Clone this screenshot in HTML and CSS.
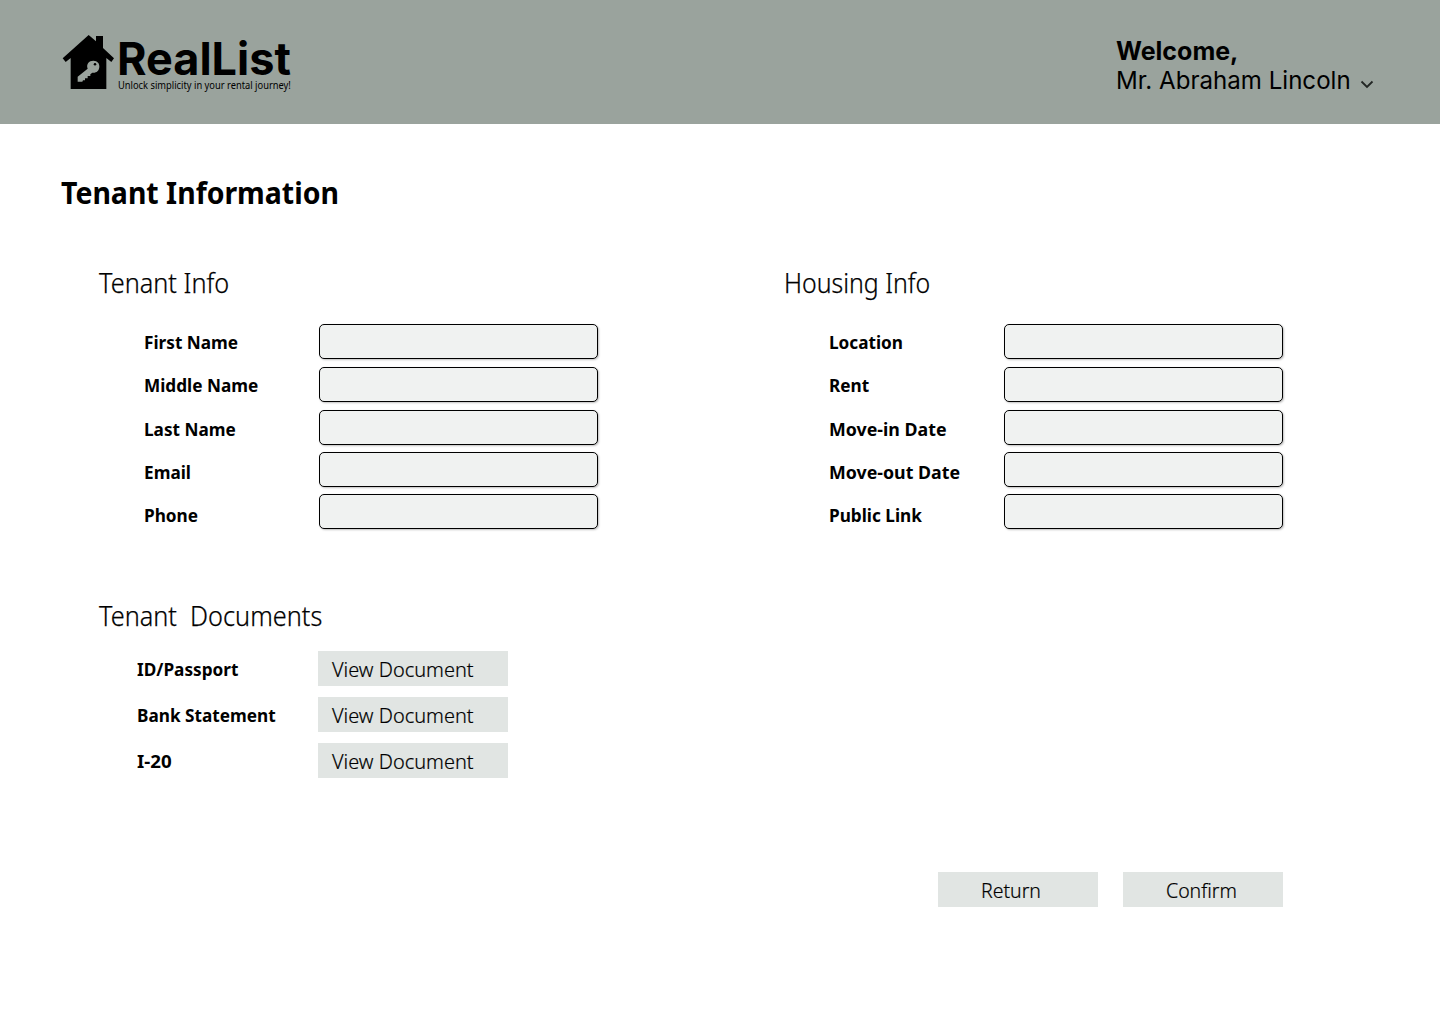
FILE: index.html
```
<!DOCTYPE html>
<html lang="en">
<head>
<meta charset="utf-8">
<title>RealList - Tenant Information</title>
<link rel="stylesheet" href="styles.css">
</head>
<body>
<header class="topbar">
  <div class="brand">
    <svg class="house" viewBox="36 25 159 168" aria-hidden="true">
      <path d="M116 28L138 47V31H159V67L192 98L184 109L169 97V190H62V97L47 109L38 98Z" fill="#000"/>
      <path d="M83 153L113 129C108 115 117 105 130 105C143 105 149 114 148 124C147 136 138 143 127 141L121 146V151H113V158H105V164H99L97 168H83Z" fill="#9aa39d"/>
      <circle cx="135" cy="116" r="3.8" fill="#000"/>
    </svg>
    <div class="brand-text">
      <span class="name">RealList</span>
      <span class="tagline">Unlock simplicity in your rental journey!</span>
    </div>
  </div>
  <div class="account">
    <span class="welcome">Welcome,</span>
    <span class="user">Mr. Abraham Lincoln
      <svg class="chevron" viewBox="0 0 14 9" aria-hidden="true"><path d="M1.5 1.5L7 7L12.5 1.5" fill="none" stroke="#222624" stroke-width="1.8"/></svg>
    </span>
  </div>
</header>
<main class="page">
  <h1>Tenant Information</h1>
  <div class="columns">
    <section>
      <h2>Tenant Info</h2>
      <div class="form">
        <div class="labels"><label for="first">First Name</label><label for="middle">Middle Name</label><label for="last">Last Name</label><label for="email">Email</label><label for="phone">Phone</label></div>
        <div class="fields"><input id="first"><input id="middle"><input id="last"><input id="email"><input id="phone"></div>
      </div>
    </section>
    <section>
      <h2 class="housing">Housing Info</h2>
      <div class="form">
        <div class="labels"><label for="location">Location</label><label for="rent">Rent</label><label for="movein" class="wide">Move-in Date</label><label for="moveout" class="wide">Move-out Date</label><label for="link">Public Link</label></div>
        <div class="fields"><input id="location"><input id="rent"><input id="movein"><input id="moveout"><input id="link"></div>
      </div>
    </section>
  </div>
  <section class="documents">
    <h2>Tenant&nbsp; Documents</h2>
    <div class="doc"><span class="doc-name">ID/Passport</span><button class="view"><span>View Document</span></button></div>
    <div class="doc"><span class="doc-name">Bank Statement</span><button class="view"><span>View Document</span></button></div>
    <div class="doc"><span class="doc-name visa">I-20</span><button class="view"><span>View Document</span></button></div>
  </section>
  <div class="actions">
    <button><span class="short">Return</span></button>
    <button><span class="short">Confirm</span></button>
  </div>
</main>
</body>
</html>
```
FILE: styles.css
```
* { box-sizing: border-box; }
body { margin: 0; background: #fff; color: #000; font-family: "Noto Sans", sans-serif; }

.topbar { height: 124px; background: #9aa39d; display: flex; justify-content: space-between; padding: 33px 66px 0 62px; }
.brand { display: flex; gap: 2px; }
.house { width: 53px; height: 56px; margin-top: .5px; }
.brand-text { display: flex; flex-direction: column; padding-top: 4px; }
.name { font: 700 45px/44px Inter, sans-serif; }
.tagline { font-size: 10.3px; line-height: 10px; white-space: nowrap; transform: scaleX(.905); transform-origin: left; width: 173px; margin: -1px 0 0 1px; }
.account { display: flex; flex-direction: column; padding-top: 4px; width: 258px; font-family: Inter, sans-serif; line-height: 29px; white-space: nowrap; }
.welcome { font-size: 25px; font-weight: 700; }
.user { display: flex; align-items: center; font-size: 24.1px; gap: 9px; }
.chevron { width: 14px; height: 9px; margin-top: 7px; flex: none; }

h1, h2 { margin: 0; transform-origin: left; white-space: nowrap; }
h1 { font-size: 31px; line-height: 40px; font-weight: 700; transform: scaleX(.917); }
h2 { font-size: 27px; line-height: 34px; font-weight: 300; transform: scaleX(.937); -webkit-text-stroke: .25px #000; }
.housing { transform: scaleX(.922); }
.page { padding: 48px 0 0 61px; }
.columns { display: grid; grid-template-columns: 685px 1fr; margin: 54px 0 0 38px; }
.form { display: flex; padding: 20px 0 0 45px; }
.labels { width: 175px; display: flex; flex-direction: column; margin-top: 1px; }
.labels label, .doc-name { font-size: 18px; font-weight: 700; transform: scaleX(.955); transform-origin: left; white-space: nowrap; }
.labels label { line-height: 43.25px; }
.labels .wide { transform: scaleX(.988); }
.fields { display: grid; grid-template-rows: 43px 43px 42px 42px 35px; padding-top: 4px; }
input { width: 279px; height: 35px; padding: 0 10px; border: 1px solid #000; border-radius: 5px; background: #f0f2f1; box-shadow: 1px 1px 2px rgba(0, 0, 0, .25); font: 18px "Noto Sans", sans-serif; }

.documents { width: 420px; margin: 62px 0 0 38px; }
.documents h2 { margin-bottom: 18px; }
.doc { display: flex; align-items: center; height: 35px; margin: 0 0 11px 38px; }
.doc-name { width: 181px; }
.doc-name.visa { transform: scaleX(1.04); }
button { width: 160px; height: 35px; border: 0; padding: 2px 0 0 43px; background: #e1e5e3; color: #000; font: 300 20.5px/33px "Noto Sans", sans-serif; text-align: left; }
button span { display: block; transform: scaleX(.973); transform-origin: left; white-space: nowrap; -webkit-text-stroke: .2px #000; }
button .short { transform: scaleX(.95); }
.view { width: 190px; padding-left: 14px; }
.actions { display: flex; justify-content: flex-end; gap: 25px; margin: 94px 157px 0 0; }
```
